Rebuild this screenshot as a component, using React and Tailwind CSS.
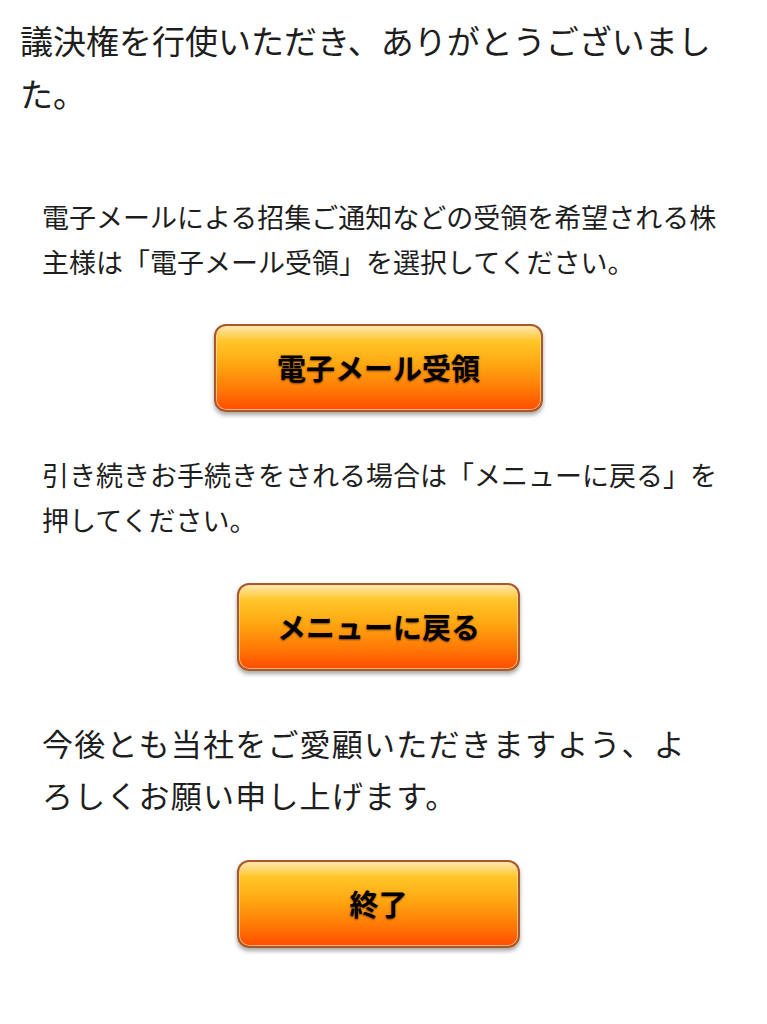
import React from 'react';

const font = { fontFamily: '"Noto Sans CJK JP", "Noto Sans", sans-serif' };

function OrangeButton({ label, wide }) {
  return (
    <div className="flex justify-center pl-[32px] pr-[42px]">
      <button
        className={`${wide ? 'w-[329px]' : 'w-[283px]'} h-[88px] rounded-[12px] border-2 border-[#a9582a] bg-[linear-gradient(to_bottom,#ffe7b0_0%,#ffc629_18%,#ffa812_45%,#ff7a06_75%,#ff4c00_100%)] shadow-[0_3px_4px_rgba(0,0,0,0.35),inset_0_0_0_1px_rgba(255,220,170,0.7)] text-[29px] font-bold text-black [text-shadow:0_1px_2px_rgba(80,30,0,0.7)]`}
      >
        {label}
      </button>
    </div>
  );
}

export default function App() {
  return (
    <div className="bg-white min-h-[1024px] text-[#1e1e1e]" style={font}>
      <p className="pt-[14px] pl-[20px] pr-[30px] text-[33px] leading-[53px]">
        議決権を行使いただき、ありがとうございました。
      </p>

      <p className="mt-[74px] pl-[42px] pr-[45px] text-[27px] leading-[45px]">
        電子メールによる招集ご通知などの受領を希望される株主様は「電子メール受領」を選択してください。
      </p>

      <div className="mt-[40px]">
        <OrangeButton label="電子メール受領" wide />
      </div>

      <p className="mt-[40px] pl-[42px] pr-[45px] text-[27px] leading-[45px]">
        引き続きお手続きをされる場合は「メニューに戻る」を押してください。
      </p>

      <div className="mt-[41px]">
        <OrangeButton label="メニューに戻る" />
      </div>

      <p className="mt-[46px] pl-[42px] pr-[20px] text-[31px] leading-[52px] tracking-[1.2px]">
        今後とも当社をご愛顧いただきますよう、よ
        <br />
        ろしくお願い申し上げます。
      </p>

      <div className="mt-[39px]">
        <OrangeButton label="終了" />
      </div>
    </div>
  );
}
